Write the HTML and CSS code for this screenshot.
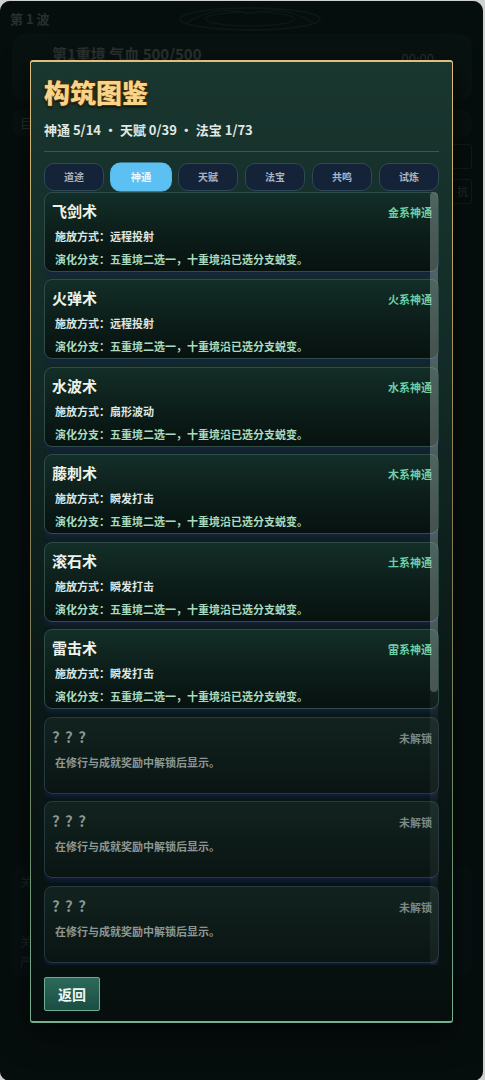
FILE: index.html
```html
<!DOCTYPE html>
<html lang="zh">
<head>
<meta charset="utf-8">
<title>构筑图鉴</title>
<link rel="stylesheet" href="styles.css">
</head>
<body>
<div class="app">
  <svg class="ornament" width="170" height="30" viewBox="0 0 170 30">
    <ellipse cx="85" cy="15" rx="70" ry="11" fill="none" stroke="#243a35" stroke-width="1.5"/>
    <ellipse cx="85" cy="15" rx="45" ry="7" fill="none" stroke="#243a35" stroke-width="1.2"/>
    <path d="M20 20 Q50 0 85 10 Q120 0 150 20" fill="none" stroke="#243a35" stroke-width="1.2"/>
  </svg>
  <div class="wave">第 1 波</div>
  <div class="stage-card">
    <span class="stage-name">第1重境 气血 500/500</span>
    <span class="stage-time">00:00</span>
  </div>
  <div class="bar-row"><span>目</span></div>
  <div class="side-box"></div>
  <div class="side-box"><span>抗</span></div>
  <div class="spacer"></div>
  <div class="bottom-panel">
    <span>关</span>
    <span>关</span>
    <span>严</span>
  </div>

  <div class="overlay">
    <div class="modal">
      <h1 class="title">构筑图鉴</h1>
      <div class="stats">神通 5/14 · 天赋 0/39 · 法宝 1/73</div>
      <div class="divider"></div>
      <div class="tabs">
        <div class="tab">道途</div>
        <div class="tab active">神通</div>
        <div class="tab">天赋</div>
        <div class="tab">法宝</div>
        <div class="tab">共鸣</div>
        <div class="tab">试炼</div>
      </div>
      <div class="list">
        <div class="cards">
          <div class="card">
            <div class="card-head"><span class="card-name">飞剑术</span><span class="card-tag">金系神通</span></div>
            <div class="card-line">施放方式：远程投射</div>
            <div class="card-line evo">演化分支：五重境二选一，十重境沿已选分支蜕变。</div>
          </div>
          <div class="card">
            <div class="card-head"><span class="card-name">火弹术</span><span class="card-tag">火系神通</span></div>
            <div class="card-line">施放方式：远程投射</div>
            <div class="card-line evo">演化分支：五重境二选一，十重境沿已选分支蜕变。</div>
          </div>
          <div class="card">
            <div class="card-head"><span class="card-name">水波术</span><span class="card-tag">水系神通</span></div>
            <div class="card-line">施放方式：扇形波动</div>
            <div class="card-line evo">演化分支：五重境二选一，十重境沿已选分支蜕变。</div>
          </div>
          <div class="card">
            <div class="card-head"><span class="card-name">藤刺术</span><span class="card-tag">木系神通</span></div>
            <div class="card-line">施放方式：瞬发打击</div>
            <div class="card-line evo">演化分支：五重境二选一，十重境沿已选分支蜕变。</div>
          </div>
          <div class="card">
            <div class="card-head"><span class="card-name">滚石术</span><span class="card-tag">土系神通</span></div>
            <div class="card-line">施放方式：瞬发打击</div>
            <div class="card-line evo">演化分支：五重境二选一，十重境沿已选分支蜕变。</div>
          </div>
          <div class="card">
            <div class="card-head"><span class="card-name">雷击术</span><span class="card-tag">雷系神通</span></div>
            <div class="card-line">施放方式：瞬发打击</div>
            <div class="card-line evo">演化分支：五重境二选一，十重境沿已选分支蜕变。</div>
          </div>
          <div class="card locked">
            <div class="card-head"><span class="card-name">? ? ?</span><span class="card-tag">未解锁</span></div>
            <div class="card-line">在修行与成就奖励中解锁后显示。</div>
          </div>
          <div class="card locked">
            <div class="card-head"><span class="card-name">? ? ?</span><span class="card-tag">未解锁</span></div>
            <div class="card-line">在修行与成就奖励中解锁后显示。</div>
          </div>
          <div class="card locked">
            <div class="card-head"><span class="card-name">? ? ?</span><span class="card-tag">未解锁</span></div>
            <div class="card-line">在修行与成就奖励中解锁后显示。</div>
          </div>
        </div>
        <div class="scroll-track"><div class="scroll-thumb"></div></div>
      </div>
      <div class="footer">
        <button class="back-btn">返回</button>
      </div>
    </div>
  </div>
</div>
</body>
</html>
```

FILE: styles.css
```css
* { box-sizing: border-box; }

html, body {
  margin: 0;
  padding: 0;
  background: #cfd2d1;
  font-family: "Noto Sans CJK SC", "Noto Sans", sans-serif;
}

.app {
  position: relative;
  width: 483px;
  height: 1080px;
  margin-top: 1px;
  border-radius: 10px;
  background: #0f1e1b;
  overflow: hidden;
  display: flex;
  flex-direction: column;
  padding: 0 11px 0 12px;
}

.ornament {
  position: absolute;
  left: 165px;
  top: 3px;
}

.wave {
  margin: 9px 0 0 -2px;
  height: 18px;
  font-size: 13px;
  font-weight: 700;
  line-height: 18px;
  color: #6f7f78;
}

.stage-card {
  margin-top: 6px;
  height: 67px;
  border-radius: 12px;
  background: #172925;
  display: flex;
  justify-content: space-between;
  align-items: flex-start;
  padding: 9px 38px 0 40px;
}

.stage-name {
  font-size: 15px;
  font-weight: 700;
  color: #75857d;
  line-height: 22px;
}

.stage-time {
  font-size: 13px;
  color: #6f7d77;
  margin-top: 6px;
  line-height: 20px;
}

.bar-row {
  margin-top: 8px;
  height: 28px;
  border-radius: 10px;
  background: #152628;
  padding-left: 8px;
  font-size: 13px;
  line-height: 28px;
  color: #6c7a76;
}

.side-box {
  align-self: flex-end;
  width: 32px;
  height: 25px;
  margin-top: 7px;
  border: 1px solid #33453f;
  border-radius: 3px;
  font-size: 11px;
  color: #6c7a76;
  text-align: right;
  padding-right: 3px;
  line-height: 23px;
}

.side-box + .side-box { margin-top: 10px; }

.spacer { flex: 1; }

.bottom-panel {
  height: 110px;
  margin-bottom: 105px;
  border-radius: 10px;
  background: #132427;
  display: flex;
  flex-direction: column;
  padding: 8px 0 0 8px;
  font-size: 12px;
  line-height: 16px;
  color: #4f5e5b;
}
.bottom-panel span:nth-child(2) { margin-top: 44px; }
.bottom-panel span:nth-child(3) { margin-top: 4px; }

.overlay {
  position: absolute;
  inset: 0;
  background: rgba(1, 6, 6, 0.66);
  display: flex;
  align-items: center;
  justify-content: center;
}

.modal {
  width: 423px;
  height: 963px;
  border-style: solid;
  border-color: transparent;
  border-width: 2px 1px 2px 1px;
  border-radius: 3px;
  background:
    linear-gradient(180deg, #19362f 0%, #132b26 30%, #0b1a17 62%, #060f0e 100%) padding-box,
    linear-gradient(180deg, #e0bf7c 0%, #8e7a4c 45%, #6a8a68 80%, #74b094 100%) border-box;
  box-shadow: 0 12px 30px rgba(0, 0, 0, 0.6);
  display: flex;
  flex-direction: column;
  padding: 14px 13px 10px 13px;
}

.title {
  margin: 0;
  font-size: 26px;
  line-height: 32px;
  font-weight: 900;
  color: #f7d489;
  text-shadow: 0 1px 0 #4a3008, 1px 0 0 #4a3008, -1px 0 0 #4a3008, 0 -1px 0 #4a3008, 0 2px 3px rgba(0,0,0,0.7);
}

.stats {
  margin-top: 13px;
  font-size: 13px;
  line-height: 18px;
  font-weight: 700;
  color: #e0e8e3;
}

.divider {
  margin-top: 12px;
  height: 1px;
  background: #3b5a46;
}

.tabs {
  margin-top: 11px;
  display: grid;
  grid-template-columns: repeat(6, 1fr);
  gap: 7px;
}

.tab {
  height: 28px;
  border-radius: 10px;
  background: #142338;
  border: 1.5px solid #2e4a56;
  font-size: 10px;
  font-weight: 700;
  line-height: 25px;
  text-align: center;
  color: #a9b5c6;
}

.tab.active {
  background: #5cc1f2;
  border-color: #5cc1f2;
  color: #eef8ff;
  transform: scale(1.03);
}

.list {
  position: relative;
  flex: 1;
  margin-top: 1px;
  overflow: hidden;
}

.cards {
  display: flex;
  flex-direction: column;
  gap: 7.5px;
}

.card {
  min-height: 77px;
  border: 1px solid #2f4c4b;
  border-radius: 8px;
  background: linear-gradient(180deg, #132e28 0%, #0c1d19 55%, #07120f 100%);
  box-shadow: 0 3px 5px rgba(22, 34, 78, 0.75);
  padding: 8px 6px 4px 7px;
  display: flex;
  flex-direction: column;
}

.card-head {
  display: flex;
  justify-content: space-between;
  align-items: center;
  height: 20px;
}

.card-name {
  font-size: 15px;
  font-weight: 700;
  color: #eef3ea;
  line-height: 20px;
}

.card-tag {
  font-size: 11px;
  font-weight: 700;
  color: #6ccfa6;
  margin-top: 2px;
}

.card-line {
  margin-top: 7px;
  padding-left: 3px;
  font-size: 11px;
  line-height: 16px;
  font-weight: 700;
  color: #dfe6e1;
}

.card-line.evo { color: #a8dbbf; }

.card.locked {
  border-color: #26393f;
  background: linear-gradient(180deg, #12231f 0%, #0d1b18 55%, #0a1513 100%);
}

.card.locked .card-name { color: #8b9692; letter-spacing: 1px; }
.card.locked .card-tag { color: #7d8884; }
.card.locked .card-line { color: #8c9792; }
.card.locked .card-head { margin-top: 1px; }

.scroll-track {
  position: absolute;
  top: 0;
  right: 1px;
  bottom: 0;
  width: 8px;
  border-radius: 4px;
  background: rgba(255, 255, 255, 0.05);
}

.scroll-thumb {
  height: 500px;
  border-radius: 4px;
  background: rgba(190, 205, 200, 0.3);
}

.footer {
  margin-top: 12px;
  display: flex;
}

.back-btn {
  width: 56px;
  height: 34px;
  border: 1px solid #6fae92;
  border-radius: 2px;
  background: linear-gradient(180deg, #2b6a5a 0%, #1c4d42 100%);
  font-family: "Noto Sans CJK SC", sans-serif;
  font-size: 14px;
  font-weight: 700;
  color: #f2f6f2;
  padding: 0;
}
```
